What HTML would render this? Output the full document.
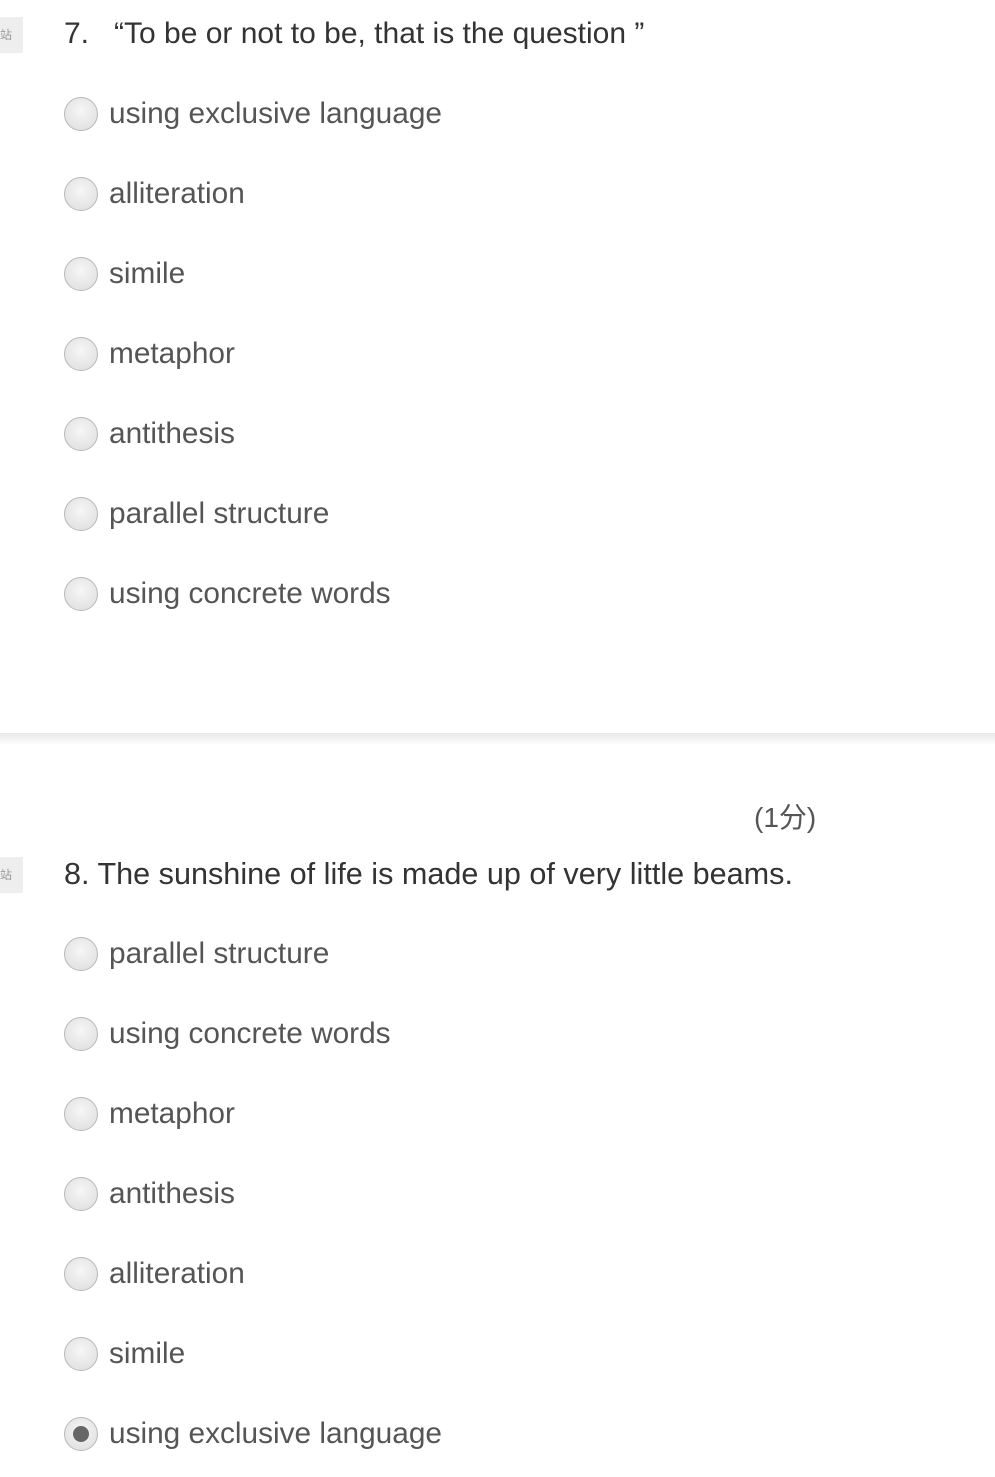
<!DOCTYPE html>
<html><head><meta charset="utf-8"><style>
body{margin:0;width:995px;height:1477px;background:#fff;position:relative;overflow:hidden;font-family:"Liberation Sans","Noto Sans CJK SC",sans-serif;}
.t{position:absolute;white-space:nowrap;line-height:1;}
.q{font-size:30px;color:#333;left:64px;}
.o{font-size:29.8px;color:#555;left:109px;}
.r{position:absolute;left:64px;width:32px;height:32px;border-radius:50%;border:1px solid #b8b8b8;background:radial-gradient(circle at 50% 40%,#f6f6f6,#dcdcdc);}
.r.c::after{content:"";position:absolute;left:8px;top:8px;width:16px;height:16px;border-radius:50%;background:#666;}
.tab{position:absolute;left:0;width:23px;height:36px;background:#eee;color:#999;font-size:12px;line-height:36px;overflow:hidden;}
.sep{position:absolute;left:0;top:733px;width:995px;height:12px;background:linear-gradient(#e8e8e8,#fff);}
</style></head><body>
<div class="tab" style="top:17px">站</div>
<div class="t q" style="top:19px">7.&nbsp;&nbsp;&nbsp;“To be or not to be, that is the question&nbsp;”</div>
<div class="r" style="top:97px"></div><div class="t o" style="top:99px">using exclusive language</div>
<div class="r" style="top:177px"></div><div class="t o" style="top:179px">alliteration</div>
<div class="r" style="top:257px"></div><div class="t o" style="top:259px">simile</div>
<div class="r" style="top:337px"></div><div class="t o" style="top:339px">metaphor</div>
<div class="r" style="top:417px"></div><div class="t o" style="top:419px">antithesis</div>
<div class="r" style="top:497px"></div><div class="t o" style="top:499px">parallel structure</div>
<div class="r" style="top:577px"></div><div class="t o" style="top:579px">using concrete words</div>
<div class="sep"></div>
<div class="t" style="left:754px;top:804px;font-size:28px;color:#555">(1分)</div>
<div class="tab" style="top:857px">站</div>
<div class="t q" style="top:859px;font-size:30.6px">8. The sunshine of life is made up of very little beams.</div>
<div class="r" style="top:937px"></div><div class="t o" style="top:939px">parallel structure</div>
<div class="r" style="top:1017px"></div><div class="t o" style="top:1019px">using concrete words</div>
<div class="r" style="top:1097px"></div><div class="t o" style="top:1099px">metaphor</div>
<div class="r" style="top:1177px"></div><div class="t o" style="top:1179px">antithesis</div>
<div class="r" style="top:1257px"></div><div class="t o" style="top:1259px">alliteration</div>
<div class="r" style="top:1337px"></div><div class="t o" style="top:1339px">simile</div>
<div class="r c" style="top:1417px"></div><div class="t o" style="top:1419px">using exclusive language</div>
</body></html>
